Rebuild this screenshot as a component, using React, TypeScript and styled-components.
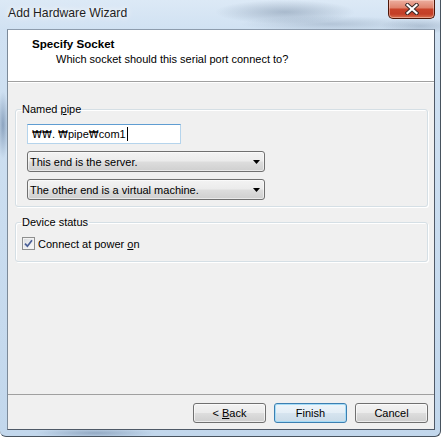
import React from "react";
import styled, { createGlobalStyle } from "styled-components";

const GlobalStyle = createGlobalStyle`
  html, body { margin: 0; padding: 0; background: #ffffff; }
  *, *::before, *::after { box-sizing: border-box; }
`;

const uiFont = `"Liberation Sans", Arial, "Noto Sans CJK KR", sans-serif`;

const Window = styled.div`
  width: 441px;
  height: 437px;
  display: flex;
  flex-direction: column;
  padding: 0 5px 6px 7px;
  border-right: 1px solid #48535f;
  border-bottom: 1px solid #48535f;
  border-radius: 0 0 6px 6px;
  font-family: ${uiFont};
  background:
    radial-gradient(70px 12px at 285px 12px, rgba(70, 92, 120, 0.32), transparent),
    radial-gradient(90px 8px at 330px 24px, rgba(70, 92, 120, 0.22), transparent),
    radial-gradient(40px 8px at 420px 26px, rgba(70, 92, 120, 0.25), transparent),
    radial-gradient(6px 34px at 3px 125px, rgba(60, 90, 130, 0.45), transparent),
    radial-gradient(60px 5px at 95px 433px, rgba(60, 85, 120, 0.35), transparent),
    linear-gradient(180deg, #dce9f6 0%, #d0e1f2 7%, #c2d7ec 100%);
`;

const TitleBar = styled.div`
  height: 29px;
  flex-shrink: 0;
  display: flex;
  align-items: flex-start;
  justify-content: space-between;
`;

const Title = styled.div`
  padding: 6px 0 0 1px;
  font-size: 12.2px;
  line-height: 15px;
  color: #1e1e1e;
  text-shadow: 0 0 5px #ffffff, 0 0 9px rgba(255, 255, 255, 0.9);
`;

const CloseButton = styled.div`
  width: 47px;
  height: 19px;
  display: flex;
  align-items: center;
  justify-content: center;
  border: 1px solid #4d1608;
  border-top: none;
  border-radius: 0 0 5px 5px;
  background: linear-gradient(
    180deg,
    #ecae9f 0%,
    #e0856f 42%,
    #c8432a 52%,
    #c33e27 78%,
    #d9714f 100%
  );
  box-shadow: inset 0 0 0 1px rgba(255, 225, 215, 0.45);
`;

const Client = styled.div`
  flex: 1;
  display: flex;
  flex-direction: column;
  border: 1px solid;
  border-color: #8d9cad #4f5967 #4f5967 #7c8a99;
  background: #f0f0f0;
  color: #000;
`;

const Header = styled.div`
  height: 52px;
  flex-shrink: 0;
  padding: 7px 0 0 24px;
  background: #ffffff;
  border-bottom: 1px solid #a0a0a0;
`;

const HeaderTitle = styled.div`
  font-weight: bold;
  font-size: 11.6px;
  line-height: 14px;
`;

const HeaderSub = styled.div`
  margin-top: 1px;
  padding-left: 24px;
  font-size: 11px;
  line-height: 14px;
`;

const Body = styled.div`
  flex: 1;
  display: flex;
  flex-direction: column;
  gap: 8px;
  padding: 19px 6px 0 7px;
  border-top: 1px solid #ffffff;
`;

const Group = styled.fieldset<{ $pad: string }>`
  margin: 0;
  min-width: 0;
  padding: ${(p) => p.$pad};
  border: 1px solid #d5dfe5;
  border-radius: 3px;
  box-shadow: inset 1px 1px 0 #ffffff, 1px 1px 0 #ffffff;
`;

const GroupLabel = styled.legend`
  margin-left: -1px;
  padding: 0 1px;
  font-size: 11px;
  line-height: 14px;
  color: #000;
`;

const Stack = styled.div`
  display: flex;
  flex-direction: column;
  align-items: flex-start;
  gap: 7px;
  padding-left: 5px;
`;

const TextBox = styled.div`
  width: 154px;
  height: 20px;
  display: flex;
  align-items: center;
  padding: 0 3px 0 4px;
  background: #ffffff;
  border: 1px solid #b5d4ec;
  border-top-color: #5f9dd2;
  font-size: 11px;
  white-space: pre;
`;

const Won = styled.span`
  display: inline-block;
  width: 10px;
  font-family: "DejaVu Sans", "Noto Sans CJK KR", sans-serif;
  font-size: 10px;
  text-align: center;
`;

const Dot = styled.span`
  display: inline-block;
  width: 6px;
`;

const Caret = styled.span`
  display: inline-block;
  width: 1px;
  height: 14px;
  margin-left: 1px;
  background: #000;
`;

const winGradient = `linear-gradient(180deg, #f3f3f3 0%, #ebebeb 48%, #dddddd 52%, #cfcfcf 100%)`;

const Select = styled.div`
  width: 238px;
  height: 21px;
  display: flex;
  align-items: center;
  justify-content: space-between;
  padding: 0 4px 0 2px;
  border: 1px solid #707070;
  border-radius: 3px;
  background: ${winGradient};
  box-shadow: inset 0 0 0 1px rgba(255, 255, 255, 0.55);
  font-size: 11px;
  line-height: 14px;
`;

const CheckRow = styled.div`
  display: flex;
  align-items: center;
  gap: 3px;
  height: 15px;
  font-size: 11px;
  line-height: 14px;
`;

const CheckBox = styled.span`
  width: 13px;
  height: 13px;
  display: flex;
  align-items: center;
  justify-content: center;
  border: 1px solid #8e8f8f;
  background: linear-gradient(135deg, #d6d8dc 0%, #eceef0 55%, #fbfbfb 100%);
  box-shadow: inset 0 0 0 1px #f2f2f2;
`;

const Footer = styled.div`
  flex-shrink: 0;
  display: flex;
  justify-content: flex-end;
  gap: 8px;
  padding: 8px 6px 6px 0;
  border-top: 1px solid #a0a0a0;
`;

const Button = styled.button<{ $primary?: boolean }>`
  width: 73px;
  height: 20px;
  padding: 0;
  font-family: ${uiFont};
  font-size: 11px;
  line-height: 14px;
  color: #000;
  border: 1px solid ${(p) => (p.$primary ? "#3c7fb1" : "#707070")};
  border-radius: 3px;
  background: ${(p) =>
    p.$primary
      ? "linear-gradient(180deg, #eef5fa 0%, #e4eef6 48%, #d6e4ef 52%, #cadbe8 100%)"
      : winGradient};
  box-shadow: inset 0 0 0 1px
    ${(p) => (p.$primary ? "#a6dcf7" : "rgba(255, 255, 255, 0.6)")};
`;

const Arrow = () => (
  <svg width="7" height="4" viewBox="0 0 7 4">
    <path d="M0 0 H7 L3.5 4 Z" fill="#000" />
  </svg>
);

const CloseGlyph = () => (
  <svg width="14" height="12" viewBox="0 0 14 12">
    <path
      d="M2.5 2 L11.5 10 M11.5 2 L2.5 10"
      stroke="#3b2a28"
      strokeWidth="4.2"
      strokeLinecap="square"
    />
    <path
      d="M2.5 2 L11.5 10 M11.5 2 L2.5 10"
      stroke="#ffffff"
      strokeWidth="2.2"
      strokeLinecap="square"
    />
  </svg>
);

const Check = () => (
  <svg width="9" height="9" viewBox="0 0 9 9">
    <path
      d="M1 4.6 L3.4 7.2 L8 1.2"
      fill="none"
      stroke="#4a5f97"
      strokeWidth="1.7"
    />
  </svg>
);

export default function App() {
  return (
    <>
      <GlobalStyle />
      <Window>
        <TitleBar>
          <Title>Add Hardware Wizard</Title>
          <CloseButton>
            <CloseGlyph />
          </CloseButton>
        </TitleBar>
        <Client>
          <Header>
            <HeaderTitle>Specify Socket</HeaderTitle>
            <HeaderSub>Which socket should this serial port connect to?</HeaderSub>
          </Header>
          <Body>
            <Group $pad="8px 6px 6px 6px">
              <GroupLabel>
                Named <u>p</u>ipe
              </GroupLabel>
              <Stack>
                <TextBox>
                  <Won>₩</Won>
                  <Won>₩</Won>
                  <Dot>.</Dot>
                  <Won>₩</Won>pipe<Won>₩</Won>com1
                  <Caret />
                </TextBox>
                <Select>
                  <span>This end is the server.</span>
                  <Arrow />
                </Select>
                <Select>
                  <span>The other end is a virtual machine.</span>
                  <Arrow />
                </Select>
              </Stack>
            </Group>
            <Group $pad="7px 6px 10px 6px">
              <GroupLabel>Device status</GroupLabel>
              <CheckRow>
                <CheckBox>
                  <Check />
                </CheckBox>
                <span>
                  Connect at power <u>o</u>n
                </span>
              </CheckRow>
            </Group>
          </Body>
          <Footer>
            <Button>
              &lt; <u>B</u>ack
            </Button>
            <Button $primary>Finish</Button>
            <Button>Cancel</Button>
          </Footer>
        </Client>
      </Window>
    </>
  );
}
